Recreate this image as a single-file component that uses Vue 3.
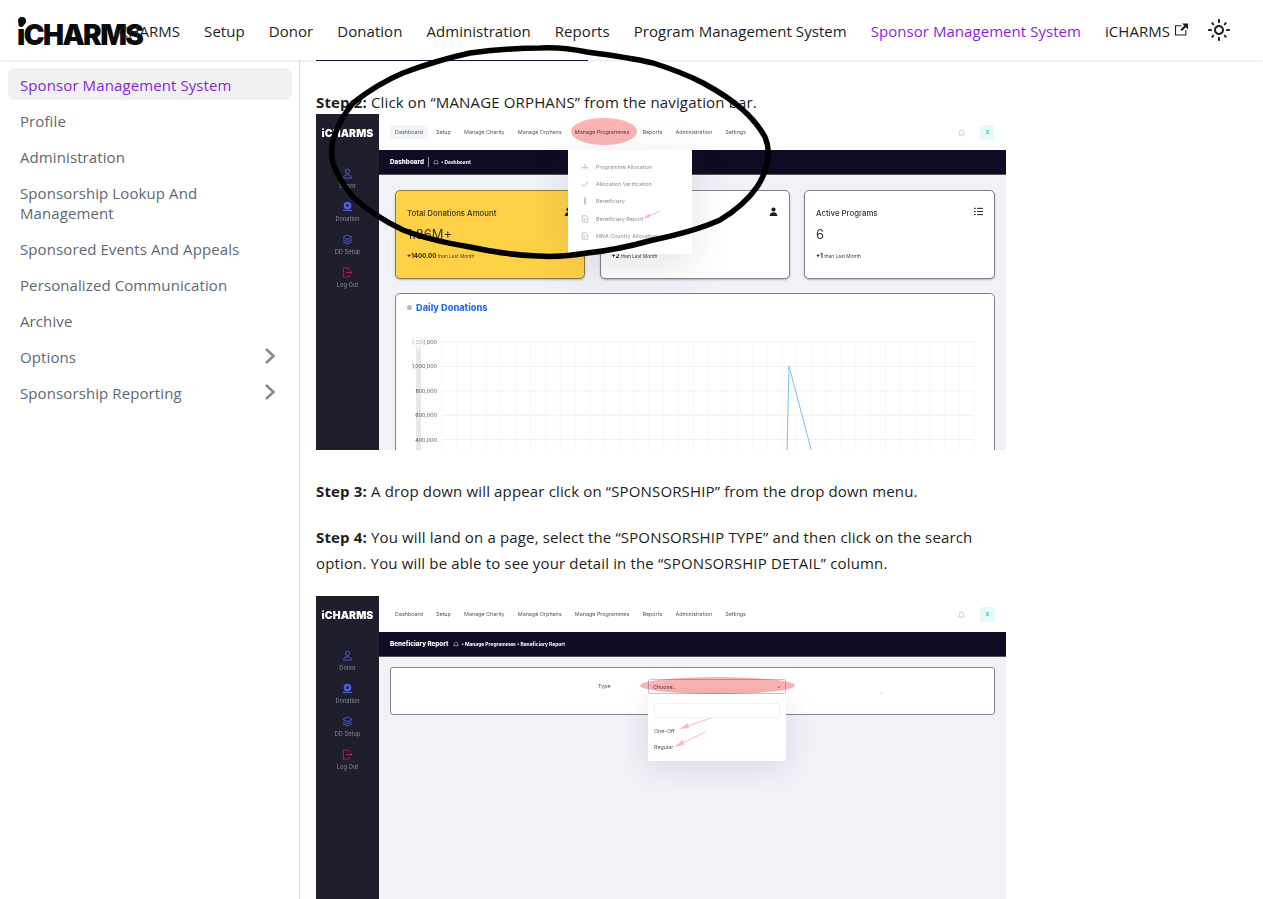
<script setup>
const navLinks = ['iCHARMS', 'Setup', 'Donor', 'Donation', 'Administration', 'Reports', 'Program Management System']
const sideItems = [
  { label: 'Sponsor Management System', active: true },
  { label: 'Profile' },
  { label: 'Administration' },
  { label: 'Sponsorship Lookup And Management' },
  { label: 'Sponsored Events And Appeals' },
  { label: 'Personalized Communication' },
  { label: 'Archive' },
  { label: 'Options', more: true },
  { label: 'Sponsorship Reporting', more: true }
]
const tabs = ['Dashboard', 'Setup', 'Manage Charity', 'Manage Orphans', 'Manage Programmes', 'Reports', 'Administration', 'Settings']
const rail = [
  { label: 'Donor', kind: 'user' },
  { label: 'Donation', kind: 'coin' },
  { label: 'DD Setup', kind: 'layers' },
  { label: 'Log Out', kind: 'out' }
]
const menu = [
  { label: 'Programme Allocation', kind: 'tree' },
  { label: 'Allocation Verification', kind: 'check' },
  { label: 'Beneficiary', kind: 'man' },
  { label: 'Beneficiary Report', kind: 'doc' },
  { label: 'MNA Country Allocation', kind: 'doc' }
]
const cards = [
  { title: 'Total Donations Amount', value: '1.86M+', delta: '+1400.00', cls: 'yellow', icon: 'person' },
  { title: '', value: '', delta: '+2', cls: '', icon: 'person' },
  { title: 'Active Programs', value: '6', delta: '+1', cls: '', icon: 'list' }
]
const yTicks = ['1,200,000', '1,000,000', '800,000', '600,000', '400,000'].map((label, i) => ({ label, y: 21 + i * 24.4 }))
const xTicks = Array.from({ length: 37 }, (_, i) => 47 + i * 14.78)
</script>

<template>
  <div class="page">
    <header class="navbar">
      <div class="brand"><span class="logo">iCHARMS</span></div>
      <a v-for="l in navLinks" :key="l" class="nav-link">{{ l }}</a>
      <a class="nav-link active">Sponsor Management System</a>
      <a class="nav-link ext">
        iCHARMS
        <svg class="ext-icon" viewBox="0 0 24 24" width="13" height="13"><path fill="#1c1e21" d="M21 13v10h-21v-19h12v2h-10v15h17v-8h2zm3-12h-10.988l4.035 4-6.977 7.07 2.828 2.828 6.977-7.07 4.125 4.172v-11z"/></svg>
      </a>
      <svg class="sun" viewBox="0 0 24 24" width="24" height="24"><path fill="#1c1e21" d="M12,9c1.65,0,3,1.35,3,3s-1.35,3-3,3s-3-1.35-3-3S10.35,9,12,9 M12,7c-2.76,0-5,2.24-5,5s2.24,5,5,5s5-2.24,5-5 S14.76,7,12,7L12,7z M2,13l2,0c0.55,0,1-0.45,1-1s-0.45-1-1-1l-2,0c-0.55,0-1,0.45-1,1S1.45,13,2,13z M20,13l2,0c0.55,0,1-0.45,1-1 s-0.45-1-1-1l-2,0c-0.55,0-1,0.45-1,1S19.45,13,20,13z M11,2v2c0,0.55,0.45,1,1,1s1-0.45,1-1V2c0-0.55-0.45-1-1-1S11,1.45,11,2z M11,20v2c0,0.55,0.45,1,1,1s1-0.45,1-1v-2c0-0.55-0.45-1-1-1C11.45,19,11,19.45,11,20z M5.99,4.58c-0.39-0.39-1.03-0.39-1.41,0 c-0.39,0.39-0.39,1.03,0,1.41l1.06,1.06c0.39,0.39,1.03,0.39,1.41,0s0.39-1.03,0-1.41L5.99,4.58z M18.36,16.95 c-0.39-0.39-1.03-0.39-1.41,0c-0.39,0.39-0.39,1.03,0,1.41l1.06,1.06c0.39,0.39,1.03,0.39,1.41,0c0.39-0.39,0.39-1.03,0-1.41 L18.36,16.95z M19.42,5.99c0.39-0.39,0.39-1.03,0-1.41c-0.39-0.39-1.03-0.39-1.41,0l-1.06,1.06c-0.39,0.39-0.39,1.03,0,1.41 s1.03,0.39,1.41,0L19.42,5.99z M7.05,18.36c0.39-0.39,0.39-1.03,0-1.41c-0.39-0.39-1.03-0.39-1.41,0l-1.06,1.06 c-0.39,0.39-0.39,1.03,0,1.41s1.03,0.39,1.41,0L7.05,18.36z"/></svg>
    </header>

    <div class="layout">
      <aside class="sidebar">
        <a v-for="s in sideItems" :key="s.label" class="side-item" :class="{ active: s.active }">
          <span class="side-label">{{ s.label }}</span>
          <svg v-if="s.more" class="chev" viewBox="0 0 14 18" width="14" height="18"><path d="M3 2l7.5 7L3 16" fill="none" stroke="#8b8b8b" stroke-width="2.6"/></svg>
        </a>
      </aside>

      <main class="content">
        <div class="rule"></div>
        <p class="step first"><b>Step 2:</b> Click on “MANAGE ORPHANS” from the navigation bar.</p>

        <!-- first screenshot -->
        <div class="shot shot-one">
          <div class="rail">
            <div class="rail-logo">iCHARMS</div>
            <div v-for="r in rail" :key="r.label" class="rail-item">
              <svg viewBox="0 0 12 12" width="11" height="11" :class="r.kind">
                <g v-if="r.kind === 'user'" fill="none" stroke="currentColor"><circle cx="6" cy="3.6" r="2.3"/><path d="M1.8 11c0-2.6 1.8-3.6 4.2-3.6s4.2 1 4.2 3.6z"/></g>
                <g v-else-if="r.kind === 'coin'" fill="currentColor"><path d="M1 11h10v-1.4H1z"/><circle cx="6" cy="5" r="4.2"/><circle cx="6" cy="5" r="1.5" fill="#1e1e2d"/></g>
                <g v-else-if="r.kind === 'layers'" fill="none" stroke="currentColor"><path d="M6 1l5 2.6-5 2.6-5-2.6zM1 6l5 2.6L11 6M1 8.4L6 11l5-2.6"/></g>
                <g v-else fill="none" stroke="currentColor"><path d="M7.5 3V1H1.5v10h6V9M4.5 6H11M9 4l2 2-2 2"/></g>
              </svg>
              <span>{{ r.label }}</span>
            </div>
          </div>
          <div class="shot-body">
            <div class="topbar">
              <span v-for="t in tabs" :key="t" class="tab" :class="{ on: t === 'Dashboard' }">{{ t }}</span>
              <svg class="bell" viewBox="0 0 10 12" width="7" height="9"><path d="M1 9.5c1-1 1-2 1-4a3 3 0 016 0c0 2 0 3 1 4zM4 11h2" fill="none" stroke="#b7b7d6"/></svg>
              <span class="avatar">S</span>
            </div>
            <div class="band">
              <b class="band-title">Dashboard</b>
              <i class="band-sep"></i>
              <svg viewBox="0 0 10 10" width="6" height="6"><path d="M1 8h8M2 8V4l3-2.4L8 4v4" fill="none" stroke="#fff" stroke-width=".8"/></svg>
              <span class="crumb">• Dashboard</span>
            </div>
            <div class="panel">
              <div class="stats">
                <div v-for="(c, i) in cards" :key="i" class="stat" :class="c.cls">
                  <div class="stat-head">
                    <span>{{ c.title }}</span>
                    <svg v-if="c.icon === 'person'" viewBox="0 0 10 10" width="9" height="9"><circle cx="5" cy="2.8" r="2.3" fill="#1c1c28"/><path d="M.8 10c0-3 1.6-4.2 4.2-4.2S9.200 7 9.200 10z" fill="#1c1c28"/></svg>
                    <svg v-else viewBox="0 0 10 10" width="9" height="9"><path d="M3.500 1.500H10M3.500 5H10M3.500 8.500H10M0 1.500h2M0 5h2M0 8.500h2" stroke="#1c1c28" stroke-width="1.100"/></svg>
                  </div>
                  <div class="stat-value">{{ c.value }}</div>
                  <div class="stat-sub"><b>{{ c.delta }}</b> than Last Month</div>
                </div>
              </div>
              <div class="chart-card">
                <div class="chart-title"><i class="chart-dot"></i>Daily Donations</div>
                <svg class="chart" viewBox="0 0 600 130" width="600" height="130">
                  <rect x="21" y="21" width="5" height="110" fill="#e8e8e8"/>
                  <line v-for="x in xTicks" :key="x" :x1="x" y1="21" :x2="x" y2="130" stroke="#f8f8f8"/>
                  <g v-for="t in yTicks" :key="t.label">
                    <line x1="47" :y1="t.y" x2="579" :y2="t.y" stroke="#efefef"/>
                    <text x="42" :y="t.y + 2" text-anchor="end" class="tick">{{ t.label }}</text>
                  </g>
                  <circle cx="23" cy="22" r="6" fill="#fff" fill-opacity=".55" stroke="#eee"/>
                  <path d="M392 132L394 45L417 132" fill="none" stroke="#79c3e2"/>
                </svg>
              </div>
            </div>
          </div>
          <div class="pink-one"></div>
          <div class="menu">
            <div v-for="m in menu" :key="m.label" class="menu-row">
              <svg viewBox="0 0 10 10" width="8" height="8">
                <path v-if="m.kind === 'tree'" d="M5 1v3M1.500 8V5.500h7V8M5 4v4" fill="none" stroke="#b5b5d4"/>
                <path v-else-if="m.kind === 'check'" d="M1 5.500l2.800 2.500L9 2" fill="none" stroke="#b5b5d4" stroke-width="1.200"/>
                <path v-else-if="m.kind === 'man'" d="M5 .5v9" fill="none" stroke="#b5b5d4" stroke-width="2"/>
                <path v-else d="M1.500 1h5l2 2v6h-7zM3 5h3.500M3 7h2" fill="none" stroke="#b5b5d4"/>
              </svg>
              <span>{{ m.label }}</span>
            </div>
          </div>
          <svg class="arrows" viewBox="0 0 690 336" width="690" height="336">
            <path d="M344 97L331 103" stroke="#f9b3b8"/>
            <path d="M326 105l7-5 1 3z" fill="#f9b3b8"/>
          </svg>
        </div>

        <p class="step after-shot"><b>Step 3:</b> A drop down will appear click on “SPONSORSHIP” from the drop down menu.</p>
        <p class="step"><b>Step 4:</b> You will land on a page, select the “SPONSORSHIP TYPE” and then click on the search option. You will be able to see your detail in the “SPONSORSHIP DETAIL” column.</p>

        <!-- second screenshot -->
        <div class="shot shot-two">
          <div class="rail">
            <div class="rail-logo">iCHARMS</div>
            <div v-for="r in rail" :key="r.label" class="rail-item">
              <svg viewBox="0 0 12 12" width="11" height="11" :class="r.kind">
                <g v-if="r.kind === 'user'" fill="none" stroke="currentColor"><circle cx="6" cy="3.6" r="2.3"/><path d="M1.8 11c0-2.6 1.8-3.6 4.2-3.6s4.2 1 4.2 3.6z"/></g>
                <g v-else-if="r.kind === 'coin'" fill="currentColor"><path d="M1 11h10v-1.4H1z"/><circle cx="6" cy="5" r="4.2"/><circle cx="6" cy="5" r="1.5" fill="#1e1e2d"/></g>
                <g v-else-if="r.kind === 'layers'" fill="none" stroke="currentColor"><path d="M6 1l5 2.6-5 2.6-5-2.6zM1 6l5 2.6L11 6M1 8.4L6 11l5-2.6"/></g>
                <g v-else fill="none" stroke="currentColor"><path d="M7.5 3V1H1.5v10h6V9M4.5 6H11M9 4l2 2-2 2"/></g>
              </svg>
              <span>{{ r.label }}</span>
            </div>
          </div>
          <div class="shot-body">
            <div class="topbar">
              <span v-for="t in tabs" :key="t" class="tab">{{ t }}</span>
              <svg class="bell" viewBox="0 0 10 12" width="7" height="9"><path d="M1 9.5c1-1 1-2 1-4a3 3 0 016 0c0 2 0 3 1 4zM4 11h2" fill="none" stroke="#b7b7d6"/></svg>
              <span class="avatar">S</span>
            </div>
            <div class="band">
              <b class="band-title">Beneficiary Report</b>
              <svg viewBox="0 0 10 10" width="6" height="6"><path d="M1 8h8M2 8V4l3-2.4L8 4v4" fill="none" stroke="#fff" stroke-width=".8"/></svg>
              <span class="crumb">• Manage Programmes • Beneficiary Report</span>
            </div>
            <div class="panel panel-two">
              <div class="filter">
                <span class="filter-label">Type</span>
                <div class="select">
                  <span>Choose..</span>
                  <svg viewBox="0 0 8 8" width="4" height="4"><path d="M1 2.500l3 3 3-3" fill="none" stroke="#555" stroke-width="1.200"/></svg>
                  <div class="options">
                    <div class="search"></div>
                    <div class="option">One-Off</div>
                    <div class="option">Regular</div>
                  </div>
                </div>
              </div>
            </div>
          </div>
          <div class="pink-two"></div>
          <svg class="arrows" viewBox="0 0 690 336" width="690" height="336">
            <circle cx="565" cy="97" r=".8" fill="#f6c3cc"/>
            <path d="M395 122L372 130M389 136L367 147" stroke="#fbb9bb"/>
            <path d="M363 133l9-6 1 5zM358 151l9-7 1 5z" fill="#fbb9bb"/>
          </svg>
        </div>
      </main>
    </div>

    <svg class="scribble" viewBox="0 0 1263 899" width="1263" height="899">
      <path d="M540 48C556 47 572 49 587 52C610 55 632 58 653 63C672 69 688 75 703 83C718 91 732 100 743 110C753 119 760 128 765 137C768 144 769 150 768 157C767 168 763 178 757 187C748 200 735 211 720 220C700 229 677 235 653 240C631 246 609 251 587 253C570 256 553 257 537 256C514 255 492 252 470 247C446 243 423 238 403 230C384 221 367 210 353 197C344 186 337 175 333 163C331 155 331 148 333 140C337 127 344 114 353 103C367 92 384 81 403 73C424 65 447 58 470 53C493 50 517 48 540 48Z" fill="none" stroke="#000" stroke-width="5.500"/>
    </svg>
  </div>
</template>

<style scoped>
.page {
  position: relative;
  width: 1263px;
  height: 899px;
  overflow: hidden;
  background: #fff;
  color: #1c1e21;
  font-family: "Open Sans", "Noto Sans", sans-serif;
  font-size: 15px;
}
.navbar {
  position: relative;
  z-index: 2;
  height: 60px;
  box-sizing: border-box;
  display: flex;
  align-items: center;
  padding-left: 17px;
  background: #fff;
  box-shadow: 0 1px 2px rgba(0, 0, 0, .1);
}
.brand { width: 86px; height: 40px; flex: none; display: flex; align-items: center; }
.logo {
  font-family: Inter, sans-serif;
  font-weight: 900;
  font-size: 28px;
  letter-spacing: -1.600px;
  color: #0a0a0a;
  white-space: nowrap;
  position: relative;
  top: 5px;
}
.logo::before {
  content: "";
  position: absolute;
  left: 1px;
  top: -1px;
  width: 8px;
  height: 8px;
  border-radius: 50%;
  background: #0a0a0a;
}
.nav-link { padding: 4px 12px; white-space: nowrap; letter-spacing: .05px; position: relative; top: 1px; }
.nav-link.active { color: #8a1fd8; }
.ext { display: flex; align-items: center; }
.ext-icon { margin-left: 5px; margin-top: -4px; }
.sun { margin-left: 7px; }
.layout { display: flex; height: 839px; }
.sidebar {
  width: 300px;
  box-sizing: border-box;
  flex: none;
  padding: 4px 7px 0 8px;
  border-right: 1px solid #dadde1;
}
.side-item {
  display: flex;
  align-items: center;
  justify-content: space-between;
  margin-top: 4px;
  padding: 6px 12px;
  line-height: 20px;
  color: #606770;
  border-radius: 6px;
  letter-spacing: .1px;
}
.side-item.active { background: #f1f1f1; color: #8a1fd8; }
.side-label { position: relative; top: 1px; }
.chev { margin-right: 3px; margin-top: -1px; flex: none; }
.content { flex: 1; min-width: 0; padding-left: 16px; overflow: hidden; }
.rule { width: 272px; height: 1px; background: #1b1640; }
.step { margin: 20px 0 0; width: 690px; line-height: 26px; letter-spacing: .15px; }
.step.first { margin-top: 28px; }
.step.after-shot { margin-top: 28px; }
.step b { font-weight: 700; }

.shot {
  position: relative;
  width: 690px;
  height: 336px;
  margin-top: 20px;
  display: flex;
  overflow: hidden;
  font-family: Inter, sans-serif;
  filter: blur(.3px);
}
.shot-one { margin-top: -1px; }
.rail { width: 63px; flex: none; background: #1e1e2d; color: #8f90a6; display: flex; flex-direction: column; align-items: center; }
.rail-logo { height: 40px; line-height: 40px; font-weight: 900; font-size: 10.5px; color: #fff; letter-spacing: .1px; }
.rail-item { display: flex; flex-direction: column; align-items: center; height: 33px; font-size: 5.700px; color: #8c8d9f; }
.rail-item:nth-child(2) { margin-top: 14px; }
.rail-item span { margin-top: 3px; line-height: 7px; }
.rail-item svg { color: #4c5fe0; flex: none; }
.rail-item svg.out { color: #c2185b; }
.shot-body { flex: 1; min-width: 0; display: flex; flex-direction: column; background: #f1f2f8; }
.topbar { height: 36px; flex: none; background: #fff; display: flex; align-items: center; padding: 0 11px; gap: 3.200px; }
.tab { padding: 4px 5px; font-size: 5.400px; line-height: 6px; color: #555; white-space: nowrap; border-radius: 2px; }
.tab.on { background: #f1f4fb; }
.bell { margin-left: auto; margin-right: 12px; }
.avatar { width: 15px; height: 15px; background: #e6f8f7; color: #22b8a8; font-size: 4.500px; font-weight: 700; display: flex; align-items: center; justify-content: center; border-radius: 2px; }
.band { height: 24px; flex: none; background: #0e0c24; display: flex; align-items: center; padding-left: 11px; color: #fff; box-shadow: 0 1px 0 #555; }
.band-title { font-size: 6.300px; font-weight: 800; margin-right: 5px; }
.band-sep { width: 1px; height: 10px; background: #999; margin-right: 4px; margin-left: -1px; }
.crumb { font-size: 4.900px; font-weight: 700; margin-left: 2px; }
.panel { padding: 16px 11px 0 16px; }
.stats { display: grid; grid-template-columns: 190px 190px 191px; gap: 14.500px; }
.stat { height: 89px; box-sizing: border-box; padding: 16px 11px 0; background: #fff; border: 1px solid #80808a; border-radius: 5px; box-shadow: 0 1px 2px rgba(0, 0, 0, .25); color: #333; }
.stat.yellow { background: #ffd147; border-color: #8c7b3e; }
.stat-head { display: flex; justify-content: space-between; align-items: flex-start; height: 12px; line-height: 12px; font-size: 7.800px; font-weight: 500; }
.stat-value { margin-top: 7px; height: 16px; line-height: 16px; font-size: 13px; }
.stat-sub { margin-top: 9px; line-height: 10px; font-size: 4.800px; color: #444; }
.stat-sub b { font-size: 6.200px; font-weight: 700; color: #222; }
.chart-card { margin-top: 14px; height: 240px; background: #fff; border: 1px solid #80808a; border-radius: 5px; box-sizing: border-box; }
.chart-title { height: 27px; padding-left: 11px; box-sizing: border-box; display: flex; align-items: center; font-size: 9.200px; font-weight: 800; color: #2b6bf3; }
.chart-dot { width: 5px; height: 5px; border-radius: 50%; background: #b5b8c8; margin-right: 4px; }
.chart { display: block; margin-left: -1px; }
.tick { font-size: 5.400px; fill: #555; }
.pink-one { position: absolute; left: 255px; top: 4px; width: 66px; height: 27px; border-radius: 50%; background: #fab4b4; mix-blend-mode: multiply; }
.menu { position: absolute; left: 252px; top: 36px; width: 124px; height: 104px; box-sizing: border-box; padding-top: 8px; background: #fff; border-radius: 0 0 2px 2px; box-shadow: 0 10px 40px rgba(60, 60, 90, .14); }
.menu-row { height: 17.400px; display: flex; align-items: center; padding-left: 13px; font-size: 5.400px; color: #8d8d99; }
.menu-row svg { margin-right: 7px; flex: none; }
.arrows { position: absolute; left: 0; top: 0; pointer-events: none; }
.panel-two { padding: 11px 11px 0; }
.filter { height: 48px; box-sizing: border-box; padding: 11px 0 0 207px; background: #fff; border: 1px solid #85858f; border-radius: 3px; display: flex; align-items: flex-start; font-size: 5.400px; color: #555; }
.filter-label { width: 50px; line-height: 14px; }
.select { position: relative; width: 138px; height: 15px; box-sizing: border-box; padding: 0 4px; border: 1px solid #b6ccf7; border-radius: 2px; display: flex; align-items: center; justify-content: space-between; }
.options { position: absolute; left: -1px; top: 14px; width: 138px; height: 67px; box-sizing: border-box; padding: 9px 6px 0; background: #fff; border-radius: 0 0 2px 2px; box-shadow: 0 6px 30px rgba(60, 60, 90, .14); }
.search { height: 15px; box-sizing: border-box; border: 1px solid #f0f0f4; border-radius: 2px; margin-bottom: 5px; }
.option { height: 16px; line-height: 16px; }
.pink-two { position: absolute; left: 324px; top: 81px; width: 155px; height: 17px; border-radius: 50%; background: #fab4b4; mix-blend-mode: multiply; }
.scribble { position: absolute; left: 0; top: 0; z-index: 3; pointer-events: none; }
</style>

<style>
html, body { margin: 0; overflow: hidden; }
</style>
